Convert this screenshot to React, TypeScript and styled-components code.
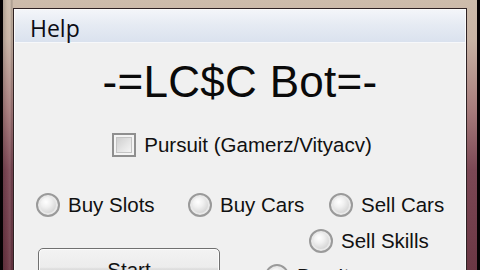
import React from "react";
import styled, { createGlobalStyle } from "styled-components";

const Global = createGlobalStyle`
  html, body { margin: 0; padding: 0; background: #000; }
  body { width: 480px; height: 270px; overflow: hidden; }
  #root { width: 480px; height: 270px; }
`;

const Screen = styled.div`
  width: 480px;
  height: 270px;
  box-sizing: border-box;
  padding: 0 3px;
  background: #050203;
  overflow: hidden;
`;

const Frame = styled.div`
  height: 100%;
  box-sizing: border-box;
  padding: 8px 10px 0 10px;
  background:
    linear-gradient(to right, rgba(0,0,0,0.15) 0, rgba(0,0,0,0) 4px, rgba(255,255,255,0.08) 7px, rgba(0,0,0,0.2) 9px, rgba(0,0,0,0) 10px),
    linear-gradient(to bottom, #cdbcab 0, #c8b3a4 40px, #a77c7c 110px, #7c4855 170px, #6b3744 270px);
  display: flex;
`;

const Window = styled.div`
  flex: 1;
  border: 1px solid #2e2224;
  border-bottom: none;
  box-shadow: inset 1px 1px 0 #fbfbfb, inset -1px 0 0 #fbfbfb;
  background: #f0f0f0;
  display: flex;
  flex-direction: column;
  font-family: "Liberation Sans", Arial, sans-serif;
  color: #111;
  overflow: hidden;
`;

const MenuBar = styled.div`
  height: 35px;
  box-sizing: border-box;
  margin: 0 1px;
  border-top: 1px solid #fbfbfb;
  border-bottom: 1px solid #f7f8fa;
  background: linear-gradient(to bottom, #f3f5f9 0, #e6ebf3 45%, #dae2ee 100%);
  display: flex;
  align-items: center;
  padding-left: 15px;
`;

const MenuItem = styled.span`
  font-family: "Open Sans", "Noto Sans", sans-serif;
  font-size: 23px;
  line-height: 28px;
  color: #0c0c14;
  margin-top: 4px;
`;

const Client = styled.div`
  flex: 1;
  display: flex;
  flex-direction: column;
  padding-top: 14px;
`;

const Title = styled.div`
  font-size: 44px;
  line-height: 50px;
  height: 50px;
  text-align: center;
  letter-spacing: 0.3px;
  color: #0a0a0a;
`;

const CheckRow = styled.label`
  margin-top: 26px;
  display: flex;
  align-items: center;
  justify-content: center;
  gap: 8px;
  padding-left: 4px;
  height: 24px;
`;

const CheckBox = styled.span`
  width: 24px;
  height: 24px;
  box-sizing: border-box;
  border: 2px solid #8f8f8f;
  background: #f4f4f4;
  display: flex;
  align-items: center;
  justify-content: center;
  &::after {
    content: "";
    width: 14px;
    height: 14px;
    border: 1px solid #c4c4c4;
    background: linear-gradient(135deg, #cfcfcf 0, #e6e6e6 60%, #f4f4f4 100%);
  }
`;

const Label = styled.span`
  font-size: 20.5px;
  line-height: 24px;
  white-space: nowrap;
  color: #111;
`;

const RadioRow = styled.div`
  margin-top: 36px;
  display: grid;
  grid-template-columns: 152px 141px auto;
  padding-left: 22px;
  height: 24px;
`;

const RadioItem = styled.label`
  display: flex;
  align-items: center;
  gap: 8px;
  height: 24px;
`;

const RadioCircle = styled.span`
  width: 24px;
  height: 24px;
  box-sizing: border-box;
  border-radius: 50%;
  border: 2px solid #9a9a9a;
  background: radial-gradient(circle at 40% 35%, #ffffff 0, #f0f0f0 30%, #d2d2d2 70%, #c4c4c4 100%);
  box-shadow: inset 0 0 0 2px #e9e9e9;
  flex: none;
`;

const Lower = styled.div`
  margin-top: 12px;
  display: grid;
  grid-template-columns: 227px auto;
  padding-left: 24px;
`;

const LeftCol = styled.div`
  padding-top: 19px;
`;

const RightCol = styled.div`
  display: flex;
  flex-direction: column;
  gap: 11px;
`;

const Button = styled.button`
  width: 182px;
  height: 40px;
  box-sizing: border-box;
  border: 1px solid #707070;
  border-radius: 5px;
  background: linear-gradient(to bottom, #f3f3f3 0, #ececec 48%, #dedede 52%, #d0d0d0 100%);
  box-shadow: inset 0 0 0 1px #fcfcfc;
  font-family: "Liberation Sans", Arial, sans-serif;
  font-size: 20.5px;
  color: #111;
  display: flex;
  justify-content: center;
  align-items: flex-start;
  padding-top: 9px;
`;

const Indent = styled.div<{ $left: number }>`
  padding-left: ${(p) => p.$left}px;
`;

export default function App() {
  return (
    <>
      <Global />
      <Screen>
        <Frame>
          <Window>
            <MenuBar>
              <MenuItem>Help</MenuItem>
            </MenuBar>
            <Client>
              <Title>-=LC$C Bot=-</Title>
              <CheckRow>
                <CheckBox />
                <Label>Pursuit (Gamerz/Vityacv)</Label>
              </CheckRow>
              <RadioRow>
                <RadioItem>
                  <RadioCircle />
                  <Label>Buy Slots</Label>
                </RadioItem>
                <RadioItem>
                  <RadioCircle />
                  <Label>Buy Cars</Label>
                </RadioItem>
                <RadioItem>
                  <RadioCircle />
                  <Label>Sell Cars</Label>
                </RadioItem>
              </RadioRow>
              <Lower>
                <LeftCol>
                  <Button>Start</Button>
                </LeftCol>
                <RightCol>
                  <Indent $left={44}>
                    <RadioItem>
                      <RadioCircle />
                      <Label>Sell Skills</Label>
                    </RadioItem>
                  </Indent>
                  <Indent $left={0}>
                    <RadioItem>
                      <RadioCircle />
                      <Label>Buy Items</Label>
                    </RadioItem>
                  </Indent>
                </RightCol>
              </Lower>
            </Client>
          </Window>
        </Frame>
      </Screen>
    </>
  );
}
